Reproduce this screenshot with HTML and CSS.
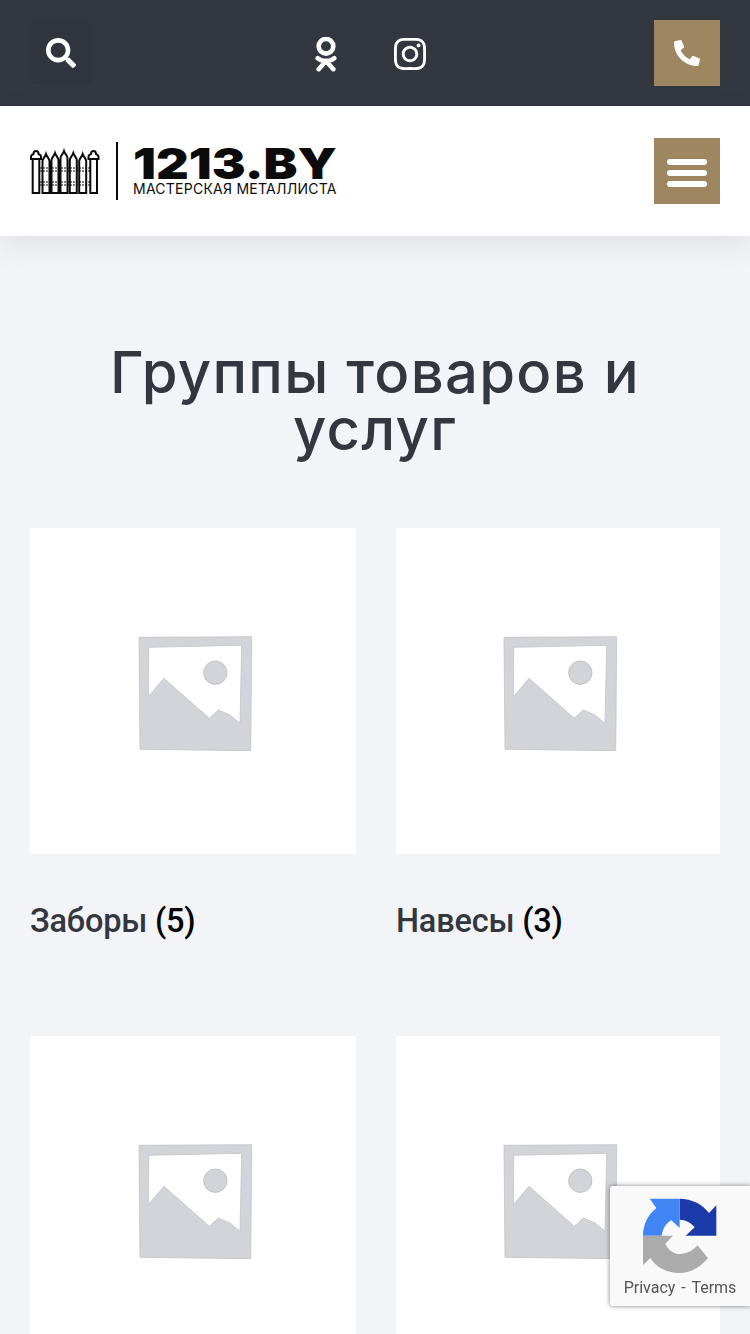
FILE: index.html
```html
<!DOCTYPE html>
<html lang="ru">
  <head>
    <meta charset="UTF-8" />
    <meta name="viewport" content="width=device-width, initial-scale=1.0" />
    <title>Группы товаров и услуг</title>
    <link rel="stylesheet" href="styles.css">
  </head>
  <body>
    <svg class="defs">
      <symbol id="placeholder" viewBox="0 0 120 120">
        <path fill="#d3d4d9" stroke="#c2c3c8" stroke-width="0.8" fill-rule="evenodd" d="M6 6.3L118.7 5.7L117.7 119.7L7 118.3ZM15.700 16.300L15.300 65.700L31 47.300L76.300 87.300L85.300 79L97 84L107 92.300L108.700 14.300Z" />
        <circle fill="#d3d4d9" stroke="#b9bac0" stroke-width="0.8" cx="82.3" cy="41.7" r="11.7" />
      </symbol>
    </svg>

    <div class="topbar">
      <a class="search-btn" href="#">
        <svg class="icon-search" viewBox="0 0 512 512"><path d="M505 442.7L405.3 343c-4.5-4.5-10.6-7-17-7H372c27.6-35.3 44-79.7 44-128C416 93.1 322.9 0 208 0S0 93.1 0 208s93.1 208 208 208c48.3 0 92.7-16.4 128-44v16.3c0 6.4 2.5 12.5 7 17l99.7 99.7c9.4 9.4 24.6 9.4 33.9 0l28.3-28.3c9.4-9.4 9.4-24.6.1-34zM208 336c-70.7 0-128-57.2-128-128 0-70.7 57.2-128 128-128 70.7 0 128 57.2 128 128 0 70.7-57.2 128-128 128z" /></svg>
      </a>
      <div class="social">
        <svg class="icon-ok" viewBox="0 0 24 38">
          <circle cx="12" cy="10" r="8" />
          <path d="M3 23C8 27 16 27 21 23M12 26L4 35M12 26L20 35" />
        </svg>
        <svg class="icon-insta" viewBox="0 32 448 448"><path d="M224.1 141c-63.6 0-114.9 51.3-114.9 114.9s51.3 114.9 114.9 114.9S339 319.5 339 255.9 287.7 141 224.1 141zm0 189.6c-41.1 0-74.7-33.5-74.7-74.7s33.5-74.7 74.7-74.7 74.7 33.5 74.7 74.7-33.6 74.7-74.7 74.7zm146.4-194.3c0 14.9-12 26.8-26.8 26.8-14.9 0-26.8-12-26.8-26.8s12-26.8 26.8-26.8 26.8 12 26.8 26.8zm76.1 27.2c-1.7-35.9-9.9-67.7-36.2-93.9-26.2-26.2-58-34.4-93.9-36.2-37-2.1-147.9-2.1-184.9 0-35.8 1.7-67.6 9.9-93.9 36.1s-34.4 58-36.2 93.9c-2.1 37-2.1 147.9 0 184.9 1.7 35.9 9.9 67.7 36.2 93.9s58 34.4 93.9 36.2c37 2.1 147.9 2.1 184.9 0 35.9-1.7 67.7-9.9 93.9-36.2 26.2-26.2 34.4-58 36.2-93.9 2.1-37 2.1-147.8 0-184.8zM398.8 388c-7.8 19.6-22.9 34.7-42.6 42.6-29.5 11.7-99.5 9-132.1 9s-102.7 2.6-132.1-9c-19.6-7.8-34.7-22.9-42.6-42.6-11.7-29.5-9-99.5-9-132.1s-2.6-102.7 9-132.1c7.8-19.6 22.9-34.7 42.6-42.6 29.5-11.7 99.5-9 132.1-9s102.7-2.6 132.1 9c19.6 7.8 34.7 22.9 42.6 42.6 11.7 29.5 9 99.5 9 132.1s2.7 102.7-9 132.1z" /></svg>
      </div>
      <a class="square-btn" href="#">
        <svg class="icon-phone" viewBox="0 0 512 512"><path d="M497.39 361.8l-112-48a24 24 0 0 0-28 6.9l-49.6 60.6A370.66 370.66 0 0 1 130.6 204.11l60.6-49.6a23.94 23.94 0 0 0 6.9-28l-48-112A24.16 24.16 0 0 0 122.6.61l-104 24A24 24 0 0 0 0 48c0 256.5 207.9 464 464 464a24 24 0 0 0 23.4-18.6l24-104a24.29 24.29 0 0 0-14.01-27.6z" /></svg>
      </a>
    </div>

    <header class="header">
      <a class="logo" href="#">
        <svg class="fence" viewBox="0 0 70 48">
          <path d="M2.700 12H9.300V46H2.700ZM60.300 12H67V46H60.300Z" />
          <path d="M1 12V9.500C1 8 3 7.500 3.500 7C3.500 3 8.500 3 8.500 7C9 7.500 11 8 11 9.500V12ZM58.500 12V9.500C58.500 8 60.500 7.500 61 7C61 3 66 3 66 7C66.500 7.500 68.500 8 68.500 9.500V12Z" />
          <path d="M12.500 46V14C12.500 12 15 10 16 7C17 10 19.500 12 19.500 14V46ZM21.500 46V13C21.500 11 24 9 25 6C26 9 28.500 11 28.500 13V46ZM30.500 46V11C30.500 9 33 7 34 4C35 7 37.500 9 37.500 11V46ZM39.800 46V13C39.800 11 42.300 9 43.300 6C44.300 9 46.800 11 46.800 13V46ZM49.200 46V14C49.200 12 51.700 10 52.700 7C53.700 10 56.200 12 56.200 14V46Z" />
          <path class="rail" d="M10 21H60M10 24H60M10 35H60M10 38H60" />
        </svg>
        <span class="logo-line"></span>
        <span class="logo-text">
          <span class="logo-name">1213.BY</span>
          <span class="logo-sub">МАСТЕРСКАЯ МЕТАЛЛИСТА</span>
        </span>
      </a>
      <a class="square-btn burger" href="#"><span></span><span></span><span></span></a>
    </header>

    <main class="content">
      <h1 class="page-title">Группы товаров и услуг</h1>
      <div class="categories">
        <a class="category" href="#">
          <div class="category-img"><svg class="placeholder"><use href="#placeholder" /></svg></div>
          <h2 class="category-title">Заборы <mark>(5)</mark></h2>
        </a>
        <a class="category" href="#">
          <div class="category-img"><svg class="placeholder"><use href="#placeholder" /></svg></div>
          <h2 class="category-title">Навесы <mark>(3)</mark></h2>
        </a>
        <a class="category" href="#">
          <div class="category-img"><svg class="placeholder"><use href="#placeholder" /></svg></div>
        </a>
        <a class="category" href="#">
          <div class="category-img"><svg class="placeholder"><use href="#placeholder" /></svg></div>
        </a>
      </div>
    </main>

    <div class="recaptcha">
      <svg class="recaptcha-logo" viewBox="130 70 222 228">
        <path fill="#1c3aa9" d="M240 72C275 72 308 88 328 115L350 92V183H258L285 158C275 145 258 135 240 135Z" />
        <path fill="#4285f4" d="M130 183C130 150 145 120 170 100L150 72H240V160L215 137C200 145 190 160 186 183Z" />
        <path fill="#ababab" d="M130 183H220L197 207C205 225 222 238 240 238C262 238 280 228 293 212L325 250C305 275 275 295 240 295C205 295 170 280 152 250L130 272Z" />
      </svg>
      <div class="recaptcha-links">Privacy <span>-</span> Terms</div>
    </div>
  </body>
</html>
```

FILE: styles.css
```css
* {
  box-sizing: border-box;
}
html,
body {
  height: 1334px;
  overflow: hidden;
}
body {
  margin: 0;
  background: #f2f4f8;
  font-family: "Roboto", sans-serif;
  color: #333740;
}
a {
  color: inherit;
  text-decoration: none;
}
.defs {
  display: none;
}

.topbar {
  display: flex;
  align-items: center;
  justify-content: space-between;
  height: 106px;
  padding: 0 30px;
  background: #333740;
}
.search-btn {
  display: flex;
  align-items: center;
  justify-content: center;
  width: 62px;
  height: 62px;
  border-radius: 6px;
  background: #30343c;
}
.icon-search {
  width: 30px;
  height: 30px;
  fill: #fff;
}
.social {
  display: flex;
  align-items: center;
  gap: 57px;
  margin: 2px 5px 0 0;
}
.icon-ok {
  width: 22px;
  height: 35px;
  fill: none;
  stroke: #fff;
  stroke-width: 5px;
  stroke-linecap: round;
}
.icon-insta {
  width: 32px;
  height: 32px;
  fill: #fff;
}
.square-btn {
  display: flex;
  align-items: center;
  justify-content: center;
  width: 66px;
  height: 66px;
  background: #9d8660;
}
.icon-phone {
  width: 26px;
  height: 26px;
  fill: #fff;
}
.burger {
  flex-direction: column;
  gap: 5px;
  padding-top: 4px;
}
.burger span {
  width: 40px;
  height: 6px;
  border-radius: 3px;
  background: #fff;
}

.header {
  position: relative;
  display: flex;
  align-items: center;
  justify-content: space-between;
  height: 130px;
  padding: 0 30px;
  background: #fff;
  box-shadow: 0 10px 30px rgba(0, 0, 0, 0.08);
}
.logo {
  display: flex;
  align-items: center;
  color: #0b0b0b;
}
.fence {
  width: 70px;
  height: 48px;
  fill: #fff;
  stroke: #0b0b0b;
  stroke-width: 2px;
}
.fence .rail {
  stroke-width: 1px;
  stroke-dasharray: 2 1;
}
.logo-line {
  width: 2px;
  height: 58px;
  margin: 0 15px 0 16px;
  background: #0b0b0b;
}
.logo-text {
  display: flex;
  flex-direction: column;
  width: 205px;
}
.logo-name {
  font-family: "Inter", sans-serif;
  font-size: 43px;
  font-weight: 900;
  line-height: 34px;
  white-space: nowrap;
  transform: scaleX(1.18);
  transform-origin: left center;
}
.logo-sub {
  margin-top: 2px;
  font-family: "Inter", sans-serif;
  font-size: 14px;
  line-height: 14px;
  letter-spacing: 0.25px;
  white-space: nowrap;
}

.content {
  padding: 108px 30px 0;
}
.page-title {
  margin: 0;
  font-family: "Inter", sans-serif;
  font-size: 58px;
  font-weight: 550;
  letter-spacing: 1.3px;
  line-height: 57px;
  text-align: center;
}
.categories {
  display: grid;
  grid-template-columns: 326px 324px;
  column-gap: 40px;
  row-gap: 34px;
  margin-top: 70px;
}
.category-img {
  display: flex;
  align-items: center;
  justify-content: center;
  height: 326px;
  background: #fff;
}
.placeholder {
  width: 120px;
  height: 120px;
}
.category-title {
  height: 102px;
  margin: 46px 0 0;
  font-size: 32.5px;
  font-weight: 500;
  letter-spacing: -0.2px;
  line-height: 42px;
}
.category-title mark {
  background: none;
  color: #000;
}

.recaptcha {
  position: fixed;
  top: 1186px;
  left: 610px;
  display: flex;
  flex-direction: column;
  align-items: center;
  width: 140px;
  height: 120px;
  padding-top: 12px;
  border-radius: 3px 0 0 3px;
  background: #f9f9f9;
  box-shadow: 0 0 5px rgba(0, 0, 0, 0.5);
}
.recaptcha-logo {
  width: 74px;
  height: 76px;
}
.recaptcha-links {
  margin-top: 4px;
  font-size: 16px;
  color: #555;
  word-spacing: 2px;
  white-space: nowrap;
}
```
